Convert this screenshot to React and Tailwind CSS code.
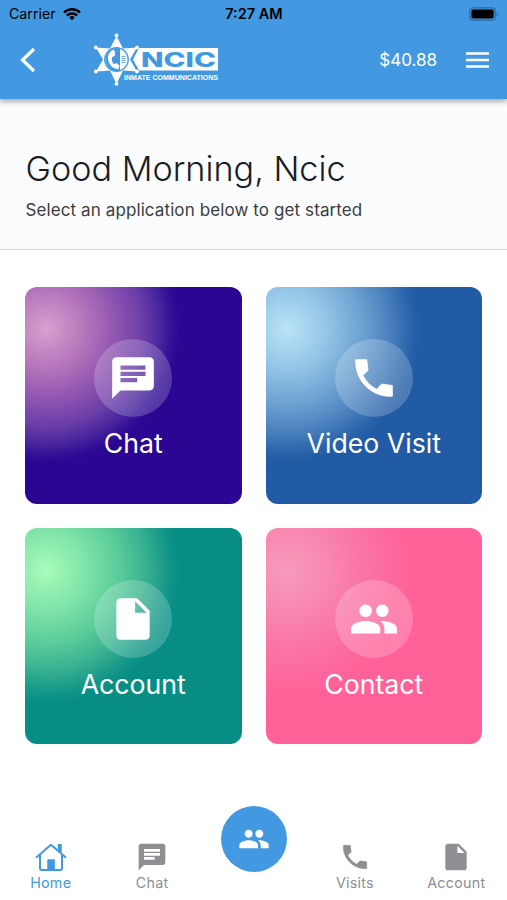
import React from "react";
import { MdChat, MdInsertDriveFile, MdPeople } from "react-icons/md";

const PhoneIcon = ({ size }) => (
  <svg width={size} height={size} viewBox="0 0 24 24" fill="currentColor">
    <path
      d="M20.800 15.600l-5.070-.7-2.520 2.470c-2.830-1.440-5.150-3.750-6.590-6.590l2.530-2.530-.650-5.050H3.230C2.700 13.180 10.820 21.300 20.800 20.770z"
      stroke="currentColor"
      strokeWidth=".4"
      strokeLinejoin="round"
    />
  </svg>
);

const apps = [
  {
    name: "Chat",
    Icon: MdChat,
    bg: "bg-[radial-gradient(circle_134px_at_21px_42px,#d6a1cf_0%,#b474bb_30%,#8c52b0_55%,#6c3ea8_72%,#48259d_86%,#331096_94%,#2a0692_100%)] bg-[#2a0692]",
  },
  {
    name: "Video Visit",
    Icon: PhoneIcon,
    bg: "bg-[radial-gradient(circle_134px_at_21px_42px,#bbe3f6_0%,#94c5e7_30%,#6ea3d2_55%,#5289c3_72%,#376fb2_86%,#2861a9_94%,#215aa5_100%)] bg-[#215aa5]",
  },
  {
    name: "Account",
    Icon: MdInsertDriveFile,
    bg: "bg-[radial-gradient(circle_134px_at_21px_42px,#a8fbbb_0%,#7fe4a8_30%,#5acb9a_55%,#3db592_72%,#1f9f8a_86%,#0e9387_94%,#068e85_100%)] bg-[#068e85]",
  },
  {
    name: "Contact",
    Icon: MdPeople,
    bg: "bg-[radial-gradient(circle_134px_at_21px_42px,#f79bbd_0%,#f888b1_30%,#fa76a7_55%,#fc6ca1_72%,#fe659b_86%,#ff6299_94%,#ff6198_100%)] bg-[#ff6198]",
  },
];

const HomeIcon = () => (
  <svg width="32" height="28" viewBox="0 0 32 28" fill="none" stroke="currentColor" strokeWidth="2">
    <path d="M1.500 14.200 16 1.800l14.500 12.400" strokeLinecap="round" strokeLinejoin="round" />
    <path d="M5 12v13a2 2 0 0 0 2 2h18a2 2 0 0 0 2-2V12" />
    <path d="M23.200 7V1.500h3v8.500" fill="currentColor" strokeWidth="1" />
    <path d="M12.800 27V16.800h6.600V27z" fill="currentColor" strokeWidth="1" />
  </svg>
);

const Logo = () => (
  <svg width="126" height="54" viewBox="0 0 126 54" fill="white">
    {/* Banner */}
    <path d="M46 15h79v22.500H46l-6-11z" />
    {/* Badge */}
    <path
      d="M23.500 3 30 15.500 44 14.500 37 26.500 44 38.500 30 37.500 23.500 51 17 37.500 3 38.500 10 26.500 3 14.500 17 15.500z"
      stroke="#4299e1"
      strokeWidth="2.400"
      paintOrder="stroke"
    />
    <circle cx="23.500" cy="2.400" r="1.900" />
    <circle cx="23.500" cy="50.800" r="1.900" />
    <circle cx="2.800" cy="14.500" r="1.900" />
    <circle cx="2.800" cy="38.500" r="1.900" />
    <circle cx="44" cy="14.500" r="1.900" />
    <circle cx="44" cy="38.500" r="1.900" />
    <circle cx="23.500" cy="26.500" r="11.700" stroke="#4299e1" strokeWidth="1.400" />
    <path d="M27 15.400a11.500 11.500 0 1 0 0 22.200z" fill="#4299e1" />
    <path d="M20 16.500c-4.500 3-6 7-4.500 12 1.500 4.500 5 7.500 10 7.500l1-3.500-3-2.500-2.500 1.200c-2-1.700-2.700-4.700-2-7.200l2.800-1 .4-4.500z" />
    <path d="M28.500 23.500h4M28.500 25.500h4M28.500 27.500h4M28.500 29.500h4" stroke="#4299e1" strokeWidth=".8" />
    <text
      x="48"
      y="33.800"
      textLength="75"
      lengthAdjust="spacingAndGlyphs"
      className="fill-[#4299e1] font-['Inter',sans-serif] text-[20.500px] font-extrabold"
    >
      NCIC
    </text>
    <text
      x="31"
      y="47"
      textLength="94"
      lengthAdjust="spacingAndGlyphs"
      className="font-['Liberation_Sans',sans-serif] text-[6.500px] font-bold"
    >
      INMATE COMMUNICATIONS
    </text>
  </svg>
);

const StatusBar = () => (
  <div className="grid h-7 grid-cols-3 items-center pl-[9px] pr-[8px] text-[14.2px] text-black">
    <div className="flex items-center gap-[7px]">
      <span>Carrier</span>
      <svg width="18" height="14" viewBox="0 0 19 14" fill="none" stroke="black" strokeWidth="2.600">
        <path d="M1 5.300a12.300 12.300 0 0 1 17 0" />
        <path d="M4 8.600a8 8 0 0 1 11 0" />
        <path d="M9.500 13.500 6.600 10.600a4.200 4.200 0 0 1 5.800 0z" fill="black" stroke="none" />
      </svg>
    </div>
    <span className="text-center text-[14.5px] font-semibold">7:27 AM</span>
    <svg className="justify-self-end" width="30" height="14" viewBox="0 0 30 14">
      <rect x=".8" y=".8" width="25.500" height="12.400" rx="3.500" fill="none" stroke="#2b6ca3" strokeWidth="1.200" />
      <rect x="2.400" y="2.400" width="22.300" height="9.200" rx="2" />
      <path d="M27.700 4.700c1.600.6 1.600 4 0 4.600z" fill="#2b6ca3" />
    </svg>
  </div>
);

const Header = () => (
  <header className="relative h-[98.5px] shrink-0 bg-[#4299e1] shadow-[0_2px_6px_rgba(0,0,0,0.4)]">
    <StatusBar />
    <div className="flex h-[64px] items-center pl-5 pr-[18px] text-white">
      <svg width="16" height="26" viewBox="0 0 16 26" fill="none" stroke="currentColor" strokeWidth="3.200">
        <path d="M14 2 2.500 13 14 24" />
      </svg>
      <div className="ml-[57px]">
        <Logo />
      </div>
      <span className="ml-auto pt-[2px] text-[17px]">$40.88</span>
      <svg className="ml-[29px]" width="23" height="17" viewBox="0 0 23 17" stroke="currentColor" strokeWidth="2.500">
        <path d="M0 1.500h23M0 8h23M0 14.500h23" />
      </svg>
    </div>
  </header>
);

const NavItem = ({ label, active, children }) => (
  <div
    className={`flex w-1/5 flex-col items-center pt-[35px] text-[14.3px] leading-[18px] tracking-[0.25px] ${
      active ? "text-[#4299e1]" : "text-[#8e8e93]"
    }`}
  >
    <div className="flex h-8 items-center">{children}</div>
    <span className="mt-[1px]">{label}</span>
  </div>
);

const App = () => {
  return (
    <div className="flex h-[900px] w-[507px] flex-col overflow-hidden bg-white font-['Inter',sans-serif]">
      <Header />

      {/* Greeting */}
      <section className="h-[151.5px] shrink-0 border-b border-[#d5d9de] bg-[#fafcfe] px-[25.5px] pt-[49.5px]">
        <h1 className="text-[34.2px] font-[350] leading-[42px] text-[#1c1c1e]">Good Morning, Ncic</h1>
        <p className="mt-[8px] text-[17px] leading-6 tracking-[0.1px] text-[#3c3c40]">
          Select an application below to get started
        </p>
      </section>

      {/* Applications */}
      <main className="grid grid-cols-2 gap-6 px-[25px] pt-[37px]">
        {apps.map(({ name, Icon, bg }) => (
          <div key={name} className={`flex h-[216.5px] flex-col items-center rounded-xl pt-[52px] text-white ${bg}`}>
            <div className="flex size-[78px] items-center justify-center rounded-full bg-white/20">
              <Icon size={50} />
            </div>
            <span className="mt-[8px] text-[26.7px] leading-9">{name}</span>
          </div>
        ))}
      </main>

      {/* Bottom tabs */}
      <nav className="mt-auto flex h-[94px]">
        <NavItem label="Home" active>
          <HomeIcon />
        </NavItem>
        <NavItem label="Chat">
          <MdChat size={32} />
        </NavItem>
        <div className="flex w-1/5 justify-center pl-px">
          <div className="flex size-[66px] items-center justify-center rounded-full bg-[#4299e1] text-white">
            <MdPeople size={32} />
          </div>
        </div>
        <NavItem label="Visits">
          <PhoneIcon size={32} />
        </NavItem>
        <NavItem label="Account">
          <MdInsertDriveFile size={32} />
        </NavItem>
      </nav>
    </div>
  );
};

export default App;
